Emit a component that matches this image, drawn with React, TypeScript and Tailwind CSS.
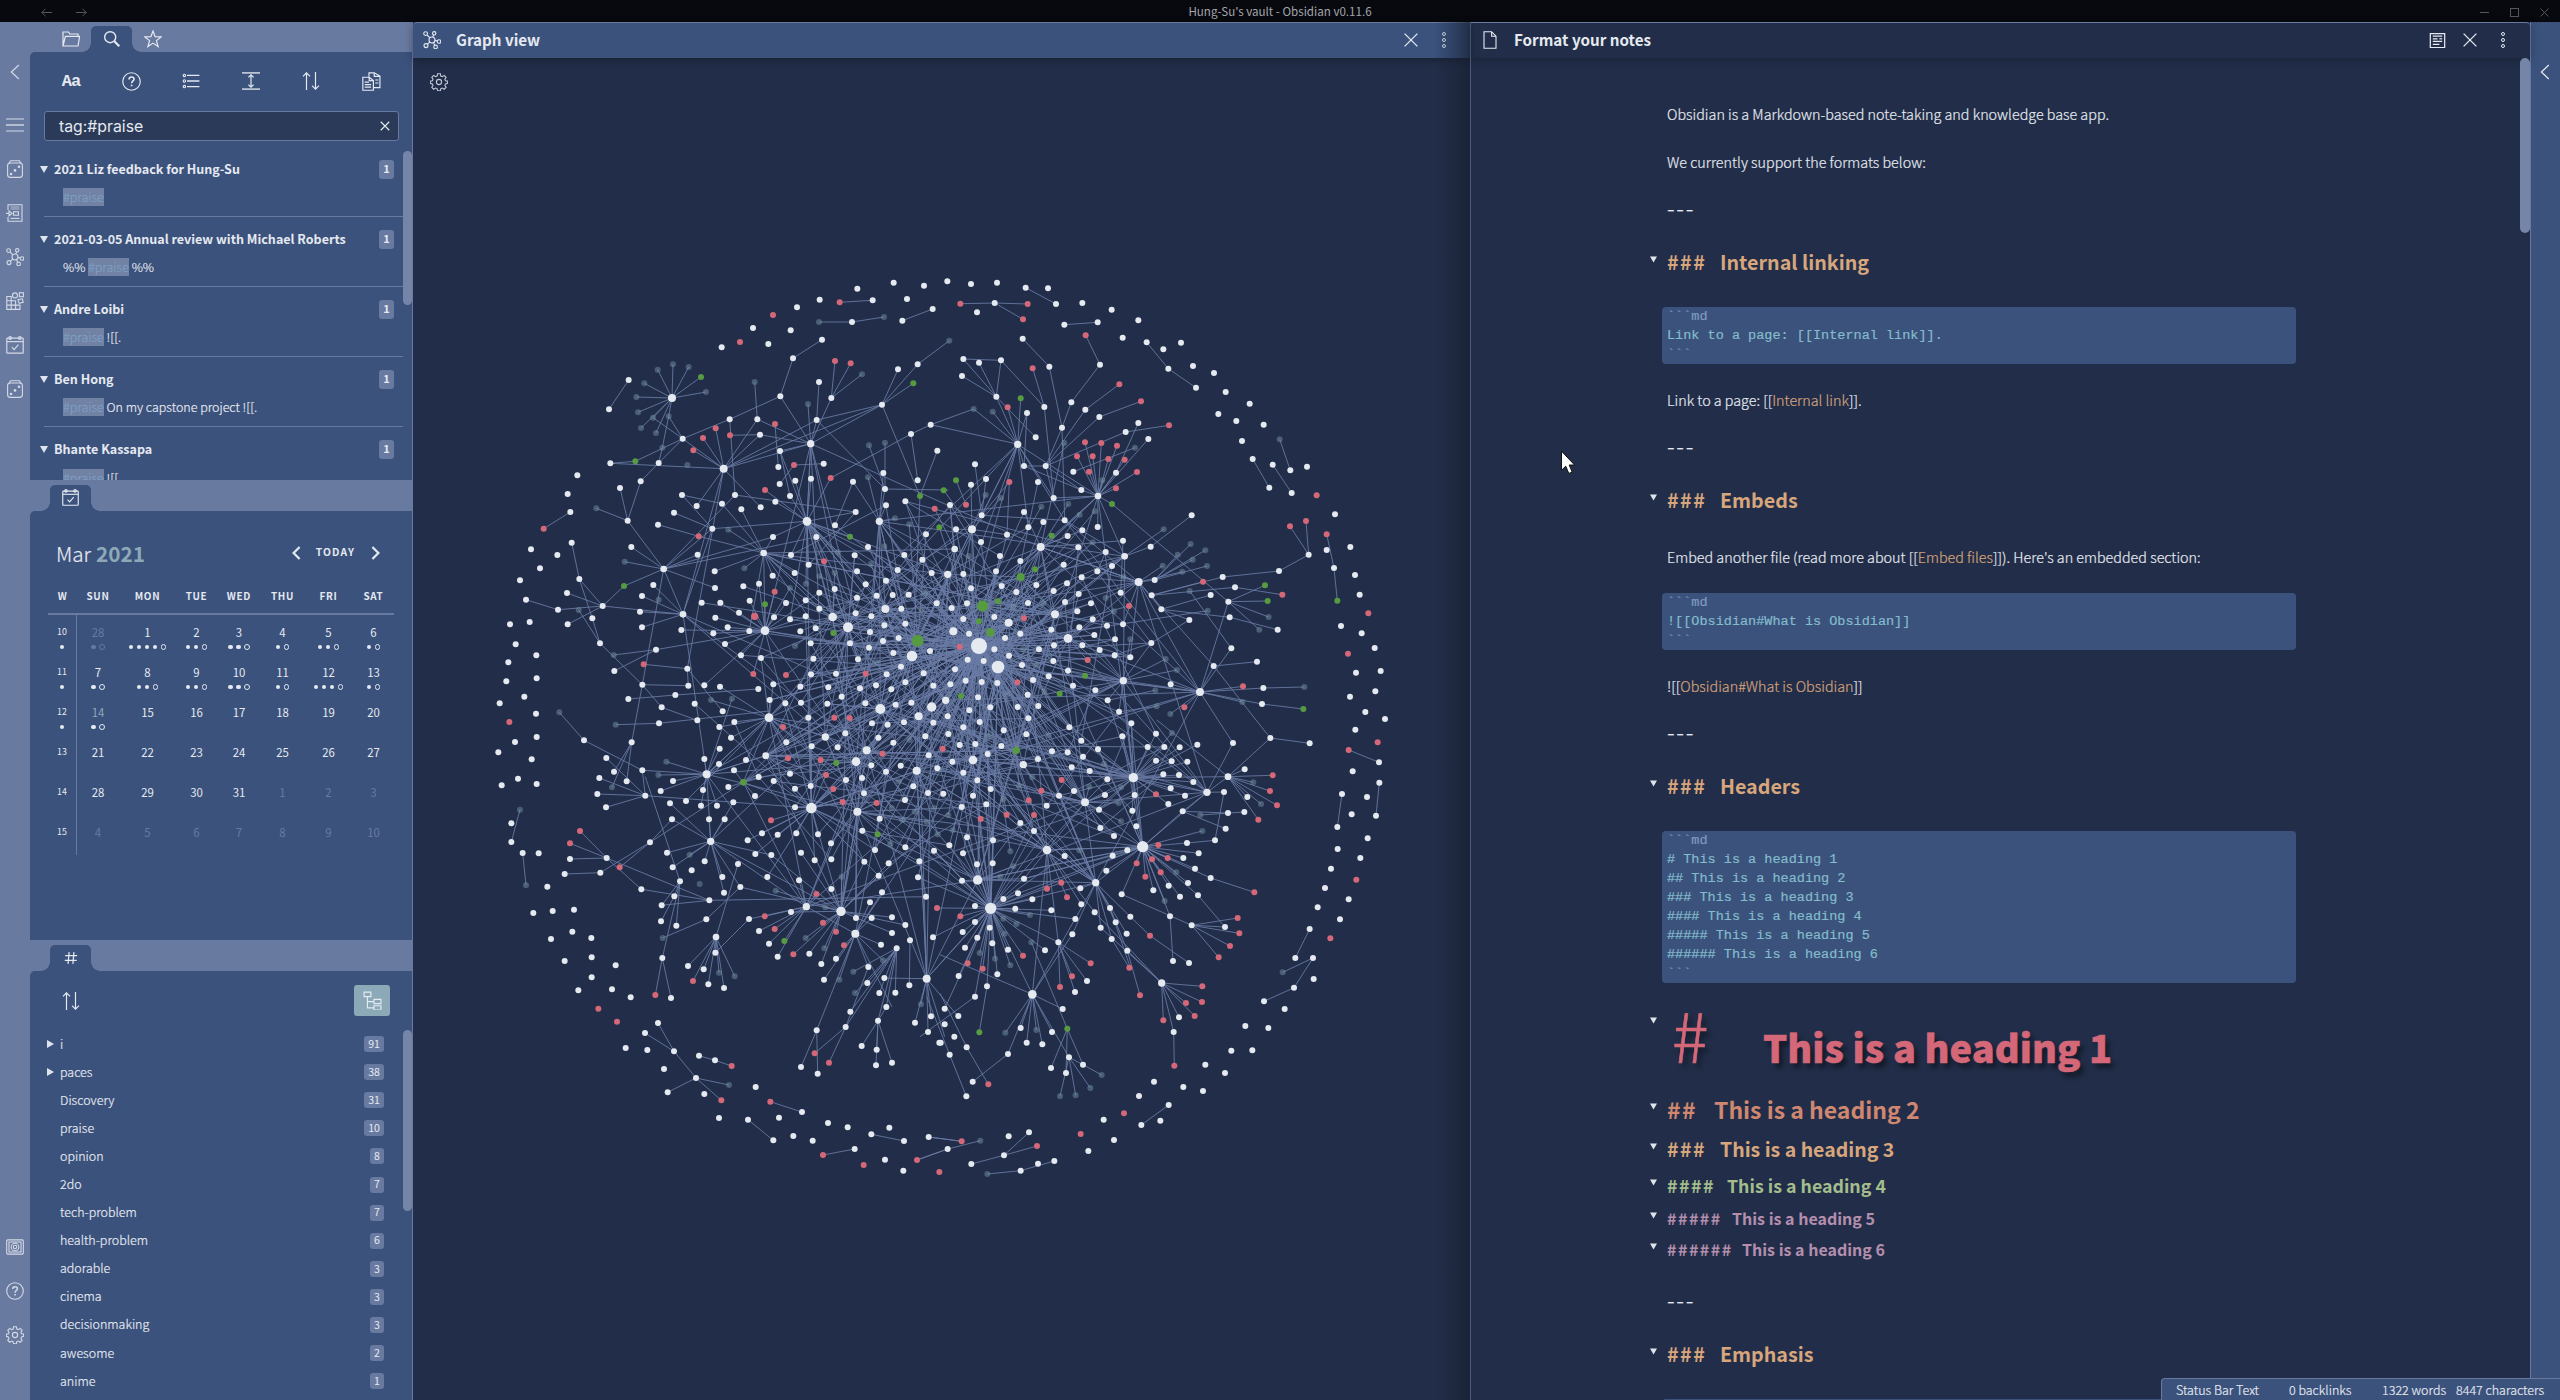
import type { ReactNode } from 'react';

/* ---------------------------------------------------------------- icons */

function Icon({ children, size = 18, w = 1.1, className = '' }: { children: ReactNode; size?: number; w?: number; className?: string }) {
  return (
    <svg width={size} height={size} viewBox="0 0 18 18" fill="none" stroke="currentColor" strokeWidth={w} className={`shrink-0 ${className}`}>
      {children}
    </svg>
  );
}

const GraphIcon = () => (
  <Icon>
    <circle cx="9" cy="9" r="3" /><circle cx="2.6" cy="2.6" r="1.9" /><circle cx="11.2" cy="2.3" r="1.7" />
    <circle cx="16" cy="10.5" r="1.8" /><circle cx="3" cy="14.6" r="2" /><circle cx="12.6" cy="15.9" r="1.8" />
    <path d="M4 4l2.9 2.8M10.6 4l-.8 2.1M12 9.4l2.3.6M4.4 13.2l2.3-2.1M10.4 11.7l1.4 2.6" />
  </Icon>
);
const DiceIcon = () => (
  <Icon>
    <rect x="1.6" y="3" width="14.8" height="14.4" rx="2.6" /><path d="M3 3.4L4.6.8h8.8L15 3.4" />
    <g fill="currentColor" stroke="none"><circle cx="5" cy="14" r="1.3" /><circle cx="9" cy="10.4" r="1.3" /><circle cx="13" cy="6.8" r="1.3" /></g>
  </Icon>
);
const DocArrowIcon = () => (
  <Icon>
    <path d="M2 6V.8h14v16.4H2V13" /><path d="M4.5 3h9M4.5 5h9" strokeOpacity=".7" />
    <path d="M0 9.4h3V7l3 2.4-3 2.4V9.4" /><rect x="7.5" y="7.8" width="5" height="3.4" /><path d="M4.5 14.4h9" />
  </Icon>
);
const BlocksIcon = () => (
  <Icon>
    <path d="M.8 4.5h4.4v4.3h4.4v4.3H14v4.3H.8zM.8 8.8h4.4v8.6M.8 13.1h8.8v4.3" />
    <circle cx="9" cy="3.4" r="2.5" /><rect x="13.4" y=".7" width="4" height="4" /><path d="M12 7.6l4.4-.8.8 3.6-4 .9z" />
  </Icon>
);
const CalIcon = ({ size = 18 }: { size?: number }) => (
  <Icon size={size} w={1.2}>
    <rect x=".8" y="2.2" width="16.4" height="15" rx=".6" /><path d="M.8 5.6h16.4" /><path d="M5.8 11.2l2.3 2.4 4.3-5" />
    <circle cx="4.2" cy="2" r="1.3" /><circle cx="13.8" cy="2" r="1.3" />
  </Icon>
);
const HelpIcon = ({ size = 18 }: { size?: number }) => (
  <Icon size={size}>
    <circle cx="9" cy="9" r="8.3" /><path d="M6.7 7c0-1.5 1-2.3 2.4-2.3s2.3.9 2.3 2.1c0 1.7-2.3 1.7-2.3 3.9" strokeWidth="1.5" /><path d="M9.1 12v1.6" strokeWidth="1.6" />
  </Icon>
);
const GearIcon = () => (
  <Icon>
    <circle cx="9" cy="9" r="2.6" />
    <path d="M7.6.8h2.8l.4 2.2 1.5.6 1.9-1.2 1.9 1.9-1.2 1.9.6 1.5 2.1.4v2.3l-2.1.5-.6 1.5 1.2 1.9-1.9 1.9-1.9-1.2-1.5.6-.4 2.1H7.6l-.5-2.1-1.5-.6-1.9 1.2-1.9-1.9L3 12.4l-.6-1.5-2.1-.5V8.1l2.1-.4L3 6.2 1.8 4.3l1.9-1.9 1.9 1.2L7.1 3z" />
  </Icon>
);
const VaultIcon = () => (
  <Icon>
    <rect x=".7" y="1.9" width="16.6" height="14.2" rx="1" /><rect x="3" y="4" width="12" height="10" />
    <circle cx="9" cy="9" r="3.8" /><circle cx="9" cy="9" r="1.7" />
  </Icon>
);
const SortIcon = () => (
  <Icon w={1.2}>
    <path d="M4.5 18V.8M1 4.3L4.5.8 8 4.3M13.5 0v17.2M10 13.7l3.5 3.5 3.5-3.5" />
  </Icon>
);
const DotsIcon = () => (
  <Icon w={1}>
    <circle cx="9" cy="3" r="1.5" /><circle cx="9" cy="9" r="1.5" /><circle cx="9" cy="15" r="1.5" />
  </Icon>
);
const CloseIcon = ({ size = 18, w = 1.1 }: { size?: number; w?: number }) => (
  <Icon size={size} w={w}><path d="M2.6 2.6l12.8 12.8M15.4 2.6L2.6 15.4" /></Icon>
);
const ChevronLeft = () => <Icon w={1.2}><path d="M12.8 2L5.4 9l7.4 7" /></Icon>;

/* ---------------------------------------------------------------- graph */

const ORIGIN: [number, number][] = [[480, 260], [940, 260], [480, 720], [940, 720]];

const WHITE = [
  '1132,86 1241,68 1332,77 1019,119 1178,121 1281,117 951,142 1358,147 1116,186 1267,182 819,204 932,211 865,252 725,262 1026,239 939,295 1313,313 1254,328 446,360 1017,366 387,448 901,409 1054,414 749,478 832,478 1010,480 1352,494 1293,522 840,524 608,536 900,573 1372,572 391,610 536,609 895,621 1031,611 292,646 1210,639 946,662 993,656 899,672 482,664 1119,665 1313,661 420,684 263,702 606,705 765,705 930,708 1215,687 886,725 1218,736 1276,724 650,738 726,731 842,742 784,748 271,756 582,758 1127,756 443,782 534,794 697,806 1065,796 879,831 1009,831 1338,823 275,848 454,861 1164,861 153,868 232,885 653,884 1124,886 1273,885 933,885 1327,899 986,914 180,925 704,934 1131,934 1253,930 944,939 1355,939 878,947 298,957 120,961 1218,962 520,975 837,971 790,979 1157,973 705,984 1064,987 261,999 1018,998 486,1008 1238,1005 1286,1004 1190,1007 138,1019 1131,1013 809,1022 977,1021 665,1028 721,1028 918,1029 368,1038 234,1049 1370,1030 1018,1046 1264,1046 480,1055 777,1058 1127,1060 977,1069 337,1075 706,1073 882,1072 1174,1069 930,1078 149,1086 90,1093 263,1093 1276,1091 1213,1096 486,1102 743,1102 1007,1105 604,1110 808,1113 961,1114 1170,1116 700,1120 1256,1134 1209,1143 992,1150 1110,1150 735,1152 107,1153 360,1150 1167,1163 528,1169 1350,1173 1240,1179 169,1186 783,1186 843,1194 1000,1196 1134,1198 85,1207 1263,1220 622,1226 403,1233 993,1243 1068,1241 1220,1243 1331,1240 170,1255 79,1264 487,1274 625,1277 673,1276 720,1280 880,1273 961,1280 1045,1282 1188,1276 1276,1267 1360,1277 835,1287 1140,1285 1234,1288 586,1305 133,1310 1085,1310 445,1317 869,1320 59,1330 644,1331 916,1330 963,1328 1042,1331 1156,1330 1247,1334 1294,1328 545,1342 168,1361 728,1354 985,1373',
  '22,64 93,72 171,68 257,83 324,85 164,129 348,132 427,129 515,149 111,157 473,187 373,194 595,181 548,233 248,236 620,247 723,248 670,268 70,297 117,308 183,301 328,320 480,314 685,326 759,318 822,339 66,348 768,383 857,396 169,410 929,431 394,427 313,441 436,449 835,462 261,459 478,471 889,483 595,489 971,494 366,503 557,516 287,532 625,537 906,543 105,613 252,618 317,618 938,597 998,614 1051,631 1101,620 400,635 528,638 138,657 294,666 93,674 988,683 424,690 1055,699 341,714 30,735 252,756 1185,763 125,766 755,766 374,781 310,786 265,802 473,801 48,808 427,811 201,824 383,828 549,842 123,846 415,862 632,860 1231,861 497,876 1160,870 1106,884 180,888 371,914 241,903 516,918 1182,924 1017,933 168,934 472,934 1245,945 70,942 644,960 425,952 848,951 381,970 185,978 289,975 885,982 93,985 341,993 229,996 542,998 416,1002 635,1006 812,1005 1259,1004 375,1026 865,1025 264,1029 81,1030 453,1030 35,1044 664,1048 412,1054 163,1071 869,1072 70,1077 458,1078 748,1080 549,1093 1203,1098 501,1097 1013,1109 418,1102 334,1109 87,1121 241,1121 1265,1120 463,1125 195,1134 525,1138 634,1149 427,1156 342,1156 1304,1164 874,1165 163,1168 297,1168 479,1170 571,1192 207,1187 524,1186 83,1199 131,1203 340,1203 951,1205 821,1218 246,1215 45,1228 384,1232 1322,1233 1248,1238 326,1249 279,1260 77,1262 125,1266 172,1269 31,1273 692,1273 399,1277 970,1284 466,1291 1306,1294 263,1304 1230,1310 114,1312 503,1321 966,1332 295,1338 233,1341 151,1342 88,1351 537,1355 1276,1356 23,1369 265,1375 1335,1377',
  '170,51 105,66 55,97 155,118 114,176 170,192 65,196 312,61 455,67 379,114 402,155 487,151 358,174 440,184 352,222 496,227 378,262 94,310 94,366 128,399 176,400 270,417 380,414 361,458 254,462 202,500 510,367 160,579 218,573 282,569 277,635 213,657 334,654 335,712 254,723 407,736 335,772 295,811 396,808 452,832 537,10 652,1 763,6 718,21 753,53 719,86 673,117 717,132 798,120 762,151 836,171 881,183 579,183 542,213 669,210 745,201 570,250 618,243 663,257 711,257 760,247 825,228 576,298 687,298 734,298 846,340 803,361 893,344 949,340 945,262 945,206 992,198 930,161 919,67 995,79 1073,82 1096,40 1176,10 1223,14 1272,7 1360,8 1195,53 1240,68 1336,49 1346,106 1174,136 1262,137 1218,155 1146,174 1098,180 1372,145 1300,199 1344,219 1152,220 1275,240 1199,296 1147,332 1014,343 1053,370 963,398 1004,421 1054,418 1153,425 1185,390 1276,382 1226,430 1318,424 1362,392 1314,472 1196,467 1206,517 1170,547 1338,530 561,398 674,424 578,442 635,451 826,402 874,405 774,432 727,471 600,484 732,518 781,501 862,471 957,481 1054,507 484,508 583,529 688,541 545,556 543,604 589,617 679,598 807,597 933,576 837,633 867,671 893,710 988,701 1024,732 1068,716 1032,779 1128,594 1175,594 1236,592 1276,615 1236,639 1290,661 1359,652 1203,674 1250,685 1165,741 1213,774 1162,789 1198,819 1246,818 1288,796 1219,861 1111,875 1194,902 1097,921 1010,931 1305,908 1353,889 1344,936 1378,968 1145,978 1190,989 1188,1036 1236,1028 963,1041 1013,1061 706,698 624,738 671,748 685,793 732,804 547,714 573,834 534,909 495,939 582,994 502,990 437,984 552,1047 648,1074 563,1117 657,1007 705,1021 673,1122 827,1101 717,1194 804,1199 966,1176 897,1193 880,1261 940,1248 998,1262 1044,1209 1103,1222 1228,1223 1174,1243 1272,1263 1346,1251 1124,1287 1215,1319 1270,1352',
  '25,42 70,22 119,6 191,31 259,43 388,22 59,75 106,72 184,78 143,102 294,117 37,125 70,158 336,94 383,97 424,62 474,88 429,110 395,142 449,153 112,181 152,207 99,227 10,221 357,227 402,213 502,178 495,225 65,261 139,253 320,257 477,269 241,309 282,333 481,324 522,348 81,352 159,361 28,376 69,400 111,433 158,430 374,408 518,407 499,452 562,391 252,476 66,482 234,520 190,537 277,538 226,566 421,505 334,571 424,553 406,597 105,558 105,606 68,636 149,623 112,653 157,670 75,683 204,689 56,768 172,763 141,799 105,830 315,691 355,667 397,643 441,783 405,816 464,577 510,564 527,607 482,623 560,641 515,657 562,692 571,590 545,523 589,319 577,272 584,225 547,49 574,10 648,41 623,81 673,81 719,82 772,74 648,122 695,124 742,125 670,163 717,165 760,186 692,205 735,227 685,252 728,274 864,279 913,276 857,326 825,361 741,369 776,400 730,414 765,446 744,489 686,497 640,511 720,530 774,526 812,474 855,621 690,589 755,616 699,723 747,729 879,69 991,54 1109,70 914,148 852,216 922,231 1246,29 1317,127 1238,154 1318,188 1206,222 1281,231 1235,283 1308,287 1192,321 1283,355 1193,387 1261,414 1173,446 1155,504 1226,538 1133,562 1200,598 1109,627 1066,714 1119,714 1121,777 1062,803 972,844 1034,867 916,918 985,924 874,992 937,991 796,1034 855,1059 642,1085 730,1101 789,1113 597,1128 686,1155 661,1202 604,1215 491,1199 522,1260 445,1293 701,936 717,892 368,867 242,924 260,968 307,973 336,936 204,1002 98,1085 14,866 55,888 14,913 43,950 80,982 29,1004 2,968 79,1129 387,1012 429,1034 333,1044 378,1059 267,1237 206,1249 192,1306 94,1332 23,1287 242,1352 294,1331 343,1323',
];

const RED = [
  '1079,127 879,165 780,246 1065,303 1112,310 885,492 707,505 750,526 669,534 640,571 942,615 1052,654 855,690 1364,746 191,806 656,829 1032,904 884,995 824,1069,11 491,1213 820,1242 918,1245 1157,1241 1063,1373 1109,1374',
  '61,131 263,132 249,178 437,226 278,325 538,373 603,424 203,442 687,496 435,547 484,549 531,557 411,589 458,589 505,597 554,599 447,635 591,636 528,685 208,666 78,734 1130,706 1098,783 1050,799 1160,823 789,965 1027,1004 567,1038 1285,1060 252,1075 59,1160 443,1200 1224,1181 232,1267 909,1279 733,1342',
  '88,6 909,21 924,115 1022,120 1038,165 1207,101 1060,207 1088,246 1190,249 873,301 300,333 270,370 419,442 1009,522 854,589 884,627 1029,608 1068,635 1092,676 940,703 1371,564 639,783 526,825 355,866 411,905 755,1038 724,1141 1004,1000 1047,1028 871,1145 1029,1305 1151,1335 1311,1320 1378,1356',
  '8,86 365,180 304,212 266,241 200,284 282,285 122,297 648,223 655,375 636,418 683,414 590,430 616,470 662,457 364,488 321,506 381,532 61,589 249,707 83,730 128,746 452,730 396,769 360,801 630,647 568,743 600,826 998,166 990,213 1011,256 955,299 943,517 893,594 898,640 870,678 836,712 1313,67 1226,90 1249,479 1171,655 787,799 786,846 738,849 764,888 670,901 703,1037 145,1093 552,1180 422,1242 291,1278 65,1264',
];

const GREEN = [
  '663,351 1300,370 466,604 1320,708 1110,830 432,978 855,1033 1060,1119 1378,802',
  '242,415 48,661 11,691 516,732 335,827 285,928 975,976 983,1023 1192,1022 174,1024 117,1084 435,1247 359,1301 63,1308 1090,1347',
  '1069,129 1193,343 913,663',
  '118,937 382,926',
];

const DIM = [
  '1017,186 1212,171 579,313 626,321 533,329 493,370 678,396 469,411 474,457 519,473 566,469 483,504 528,519 824,366 984,432 1146,343 547,563 622,615 1167,556 1215,548 1164,652 349,745 1245,775 1288,793 745,809 1213,859 434,905 1074,877 1173,911 793,925 1064,938 1018,949 978,971 930,984 536,1019 296,1050 945,1158 401,1185 1190,1207 238,1357 693,1320 756,1316 1335,1000 1326,1049',
  '28,242 101,447 158,455 373,549 585,563 1019,538 137,705 183,714 304,740 385,732 419,764 465,754 487,661 671,808 752,852 796,871 713,884 758,899 668,917 801,918 727,935 551,950 458,847 749,993 803,1052 986,1071 958,1109 497,1014 522,1054 571,1138 677,1197 711,1230 646,1291 650,1339 691,1362 1093,1281 907,1326 313,1294 202,1304 290,1215 86,888 220,1040 250,1168 310,1030',
  '407,14 559,125 535,165 396,202 120,269 138,496 629,404 659,492 887,512 548,654 717,758 764,769 1255,184 1235,264 1304,275 1267,300 1340,306 1362,264 1231,372 1373,343 1085,470 1036,562 977,654 1033,685 1078,779 1120,755 1125,819 1209,721 1323,853 747,1095 1289,60',
  '147,47 326,46 237,197 277,172 190,238 448,200 492,131 543,202 536,249 543,304 418,391 211,394 220,439 181,470 270,585 194,641 230,612 190,596 274,667 119,699 165,716 211,736 696,39 940,187 963,252 781,285 787,333 709,457 674,543 1028,757 196,938 289,930 485,1065 451,1104 407,1126 360,1129 121,1262 142,1362 38,330 25,285',
];

/* x, y, radius of the well-connected notes */
const HUBS = [
  '576,414,12 992,551,11 731,626,12 1206,434,9 981,784,13 1198,784,11 551,927,10 851,879,10 609,1063,10 1058,1071,13 1104,1102,15 855,1112,13 1216,1047,12 1296,1188,16 1201,1347,15 1355,1341,14 867,1373,13 1316,1369,12',
  '233,553,11 474,708,10 96,808,12 44,867,10 302,861,12 554,889,10 596,966,12 23,943,11 345,1063,12 206,1088,12 40,1114,12 384,1135,13 117,1158,24 174,1221,19 550,1262,11 780,1296,12 17,1321,11',
  '680,163,12 857,107,10 1036,51,11 1128,125,13 1160,91,12 994,264,16 1132,275,12 1310,152,12 692,364,11 979,560,11 1083,574,14 1126,641,12 708,651,10 1340,776,12',
  '99,120,13 250,134,11 580,173,14 435,247,12 321,390,13 608,380,17 113,480,14 152,565,17 467,488,11 864,170,10 801,217,11 277,823,13 665,789,11 ',
];
const GREEN_HUBS = ['1313,1142,18', '128,1038,17 242,951,12 151,1117,13', '790,187,10', '229,91,11'];

/* source>targets */
const LINKS = [
  '1079,127>1178,121|1017,186>1116,186|1212,171>1116,186|1267,182>1358,147|1026,239>939,295|939,295>901,409|901,409>749,478 992,551|576,414>579,313 626,321 533,329 493,370 678,396 469,411 474,457 519,473 566,469 483,504 528,519 663,351|446,360>387,448|824,366>832,478|832,478>731,626 992,551|749,478>608,536 765,705|608,536>519,473 566,469 466,604 536,609 731,626|391,610>466,604 731,626|536,609>547,563 482,664|547,563>566,469|482,664>443,782|420,684>443,782|349,745>443,782|443,782>551,927|731,626>640,571 669,534 707,505 840,524 992,551 1206,434 1010,480 650,738 842,742 609,1063 622,1226|750,526>840,524|840,524>992,551|1017,366>1010,480|984,432>992,551|1010,480>992,551 1206,434 1215,687|1054,414>1065,303 1112,310 1146,343 992,551|1206,434>1254,328 1313,313 1300,370 992,551 1320,708|1313,313>1408,242|885,492>895,621|900,573>992,551 981,784|942,615>1031,611 899,672|946,662>981,784|993,656>981,784|930,708>981,784 900,573|855,690>981,784|1052,654>981,784 1293,522|1293,522>1352,494 1313,661|1352,494>1481,447 1615,553|1167,556>1215,687|1215,548>1215,687|1210,639>1198,784|1164,652>1198,784|1119,665>1198,784 1065,796|1372,572>1320,708|1215,687>1405,690 1198,784|981,784>697,806 1127,756 992,551 1009,831 1058,1071 1127,1060 1216,1047 1104,1102 930,1078 879,831 1131,934|606,705>726,731 697,806|582,758>697,806|534,794>656,829|656,829>851,879|697,806>609,1063 551,927|726,731>851,879|765,705>1127,756 551,927|745,809>851,879|879,831>551,927|653,884>551,927|454,861>551,927|434,905>551,927|551,927>432,978 609,1063 487,1274 705,984 1009,831|432,978>368,1038|368,1038>261,999 234,1049 263,1093 298,957 609,1063|234,1049>138,1019|275,848>298,957|298,957>337,1075|337,1075>360,1150|296,1050>360,1150|360,1150>487,1274|271,756>191,806|520,975>609,1063|486,1008>609,1063|480,1055>609,1063|486,1102>609,1063|491,1213>622,1226|528,1169>403,1233 855,1112|401,1185>528,1169|487,1274>625,1277 545,1342 455,1447|545,1342>652,1381|586,1305>445,1317 835,1287|622,1226>625,1277 728,1354|238,1357>312,1441|704,934>851,879|851,879>855,1112 808,1113 1104,1102 879,831|1198,784>1296,1188 1216,1047 1460,1158 1273,885|992,551>1104,1102 981,784|1320,708>1300,1188',
  '257,83>348,132|61,131>164,129|164,129>263,132 249,178|373,194>473,187|437,226>480,314|480,314>394,427|394,427>366,503|248,236>328,320|328,320>366,503|70,297>183,301 169,410|117,308>169,410|66,348>169,410|183,301>169,410 313,441|169,410>233,553 287,532|278,325>313,441|313,441>341,714|242,415>233,553|203,442>252,618|261,459>233,553 252,618|101,447>233,553|158,455>233,553|366,503>317,618 374,781|538,373>436,449|436,449>317,618|603,424>478,471|478,471>317,618|687,496>557,516|557,516>317,618|595,489>528,638|625,537>474,708|585,563>400,635|528,638>474,708|474,708>435,547 484,549 531,557 411,589 458,589 505,597 554,599 447,635 591,636 528,685 516,732 341,714 424,690 302,861 487,661|516,732>865,1025|317,618>341,714 424,690 252,618|233,553>125,766 341,714 374,781 265,802|252,618>424,690|620,247>685,326|685,326>768,383|1019,538>1051,631|938,597>988,683|998,614>1055,699|1050,799>1106,884|1098,783>1106,884|1106,884>1017,933|1017,933>848,951|1160,823>1182,924|1182,924>1192,1022|105,613>125,766|138,657>125,766|93,674>96,808|78,734>48,661|208,666>201,824 125,766|294,666>265,802|11,691>96,808|30,735>44,867|137,705>96,808|183,714>96,808|374,781>125,766 596,966 554,889 780,1296|755,766>632,860|632,860>554,889|671,808>554,889|549,842>302,861 542,998|752,852>644,960|796,871>644,960|713,884>644,960|758,899>644,960|801,918>644,960|668,917>596,966|727,935>596,966|596,966>644,960 302,861 425,952 571,1192 780,1296 821,1218 664,1048 472,934|848,951>635,1006|789,965>635,1006|885,982>635,1006 1027,1004|812,1005>664,1048|865,1025>975,976 983,1023 986,1071 958,1109 780,1296|869,1072>1013,1109 664,1048|664,1048>748,1080 635,1006|748,1080>634,1149|634,1149>524,1186 550,1262|874,1165>780,1296 749,993|821,1218>951,1205 948,1380 780,1296|780,1296>970,1284 909,1279 966,1332 692,1273 550,1262 834,1380 733,1342 691,1362|970,1284>1093,1281|966,1332>1090,1347|677,1197>550,1262|711,1230>550,1262|646,1291>503,1321|650,1339>537,1355|550,1262>117,1158 384,1232 503,1321',
  '120,269>94,366|128,399>138,496|312,61>487,151|487,151>496,227 680,163|455,67>402,155 440,184 396,202|496,227>379,114 358,174 352,222 378,262 994,264|496,170>600,484|559,125>680,163|535,165>680,163|579,183>680,163|542,213>680,163|669,210>680,163|680,163>857,107 1128,125 692,364|300,333>380,414|270,370>380,414|270,417>380,414|380,414>484,508 688,541|254,462>361,458|361,458>510,367|510,367>419,442 576,298|510,367>790,187|484,508>688,541|600,484>583,529 545,556 589,617|583,529>543,604|688,541>545,556 1338,530|548,654>679,598|679,598>781,501|547,714>600,484 526,825 573,834|708,651>624,738 639,783 671,748 685,793 717,758 732,804 764,769 706,698 774,432|706,698>807,597|807,597>979,560|837,633>979,560|854,589>979,560|867,671>979,560|884,627>979,560|893,710>979,560|913,663>979,560|933,576>1083,574|940,703>1083,574|977,654>1083,574|988,701>1083,574|1024,732>1083,574|1029,608>1083,574|1032,779>1126,641|1068,716>1126,641|1078,779>1126,641|1068,635>1083,574|1120,755>1250,685|1125,819>1250,685|1126,641>1010,931 1165,741 1236,861|1010,931>963,1041 1013,1061|1097,921>1004,1000 1047,1028 1165,741|1250,685>1097,921 1162,789 1198,819 1246,818 1111,875|1219,861>1250,685 1194,902|1194,902>1145,978 1190,989 1236,1028 1188,1036 1250,685|1288,796>1290,661|1340,776>1213,774 1305,908 1323,853 1353,889 1344,936 1310,152 1394,950 1435,890|534,909>582,994|495,939>582,994|582,994>648,1074|648,1074>563,1117 747,1095 724,1141|657,1007>705,1021|705,1021>755,1038|871,1145>966,1176|804,1199>880,1261|1174,1243>1272,1263|1029,1305>1124,1287|1346,1251>1445,1264|1311,1320>1403,1287|692,364>561,398 576,298 578,442 674,424 781,501 1083,574 874,405 979,560|407,14>537,10|537,10>867,-27|1132,275>1128,594|1130,275>1126,594|1083,574>874,405 781,501 1132,275 1196,467',
  '1226,90>1317,127|1318,188>1308,287|1206,222>1192,321|1109,627>1066,714|1028,757>1119,714|1119,714>1062,803|1062,803>972,844|834,0>879,69|948,0>991,54|879,69>801,217|991,54>1109,70 864,170|864,170>998,166 914,148 990,213 1011,256 940,187 963,252 922,231 955,299 801,217 650,0|801,217>435,247 852,216 608,380 728,274|852,216>825,361|728,274>864,279 857,326 608,380|781,285>913,276|580,173>574,10 648,41 623,81 673,81 719,82 772,74 648,122 695,124 742,125 670,163 717,165 760,186 692,205 735,227 685,252 648,223 584,225 435,247 321,94 577,272|608,380>655,375 636,418 683,414 590,430 616,470 662,457 709,457 674,543 741,369 776,400 730,414 765,446 744,489 686,497 640,511 720,530 774,526 812,474 787,333 589,319 562,391 152,565 113,480 190,537 252,476 518,407 321,390 499,452 545,523 690,589 467,488|812,474>943,517|741,369>825,361|774,526>855,621|545,523>755,616|690,589>699,723|755,616>893,594 898,640 870,678 836,712 855,621|571,590>630,647|630,647>747,729|467,488>510,564 527,607 560,641 515,657 482,623 571,590 113,480 277,823 397,643|510,564>562,692 571,743|562,692>600,826 665,789|515,657>568,743|482,623>665,789|464,577>665,789|665,789>787,799 786,846 738,849 764,888 670,901 717,892 701,936|701,936>703,1037|321,390>464,577 355,667 435,247 252,476|355,667>360,801 396,769 441,783 405,816 452,730|277,823>196,938 242,924 289,930 260,968 307,973 336,936 368,867 204,1002 387,1012 0,704 397,643|204,1002>98,1085|382,926>333,1044 429,1034 378,1059 274,667|387,1012>360,1129 407,1126 451,1104 429,1034|429,1034>485,1065|152,565>61,589 105,558 105,606 68,636 149,623 112,653 157,670 75,683 204,689 119,699 165,716 211,736 83,730 128,746 56,768 172,763 141,799 249,707 194,641 230,612 270,585 190,596 105,830 190,537 277,823 315,691 355,667 334,571|141,799>118,937|105,830>-60,950|29,1004>79,1129 -40,830|80,982>145,1093 0,820|267,1237>192,1306|192,1306>291,1278 94,1332|-34,1251>65,1264|23,1287>121,1262 -69,1320|142,1362>242,1352|242,1352>343,1323|604,1215>686,1155|435,247>502,178 495,225 477,269 481,324 522,348 543,202 536,249 543,304',
];

type P = { x: number; y: number; r: number };

function parse(groups: string[], r: number): P[] {
  return groups.flatMap((g, q) =>
    g.trim().split(/\s+/).map((s) => {
      const [x, y, size] = s.split(',').map(Number);
      return { x: ORIGIN[q][0] + x / 3, y: ORIGIN[q][1] + y / 3, r: size ? size / 3 : r };
    }),
  );
}

const white = parse(WHITE, 3);
const red = parse(RED, 3);
const green = parse(GREEN, 3);
const dim = parse(DIM, 3);
const hubs = parse(HUBS, 4);
const greenHubs = parse(GREEN_HUBS, 4);

function buildEdges() {
  const out: string[] = [];
  const linked = new Set<string>();
  const key = (x: number, y: number) => `${Math.round(x)},${Math.round(y)}`;
  const add = (ax: number, ay: number, bx: number, by: number) => {
    out.push(`M${ax.toFixed(1)} ${ay.toFixed(1)}L${bx.toFixed(1)} ${by.toFixed(1)}`);
    linked.add(key(ax, ay));
    linked.add(key(bx, by));
  };
  LINKS.forEach((g, q) => {
    const [ox, oy] = ORIGIN[q];
    g.split('|').forEach((entry) => {
      const [src, dst] = entry.split('>');
      const [sx, sy] = src.split(',').map(Number);
      dst.trim().split(/\s+/).forEach((d) => {
        const [tx, ty] = d.split(',').map(Number);
        add(ox + sx / 3, oy + sy / 3, ox + tx / 3, oy + ty / 3);
      });
    });
  });

  let seed = 20210314;
  const rnd = () => {
    seed = (seed * 1664525 + 1013904223) >>> 0;
    return seed / 4294967296;
  };
  const all = [...hubs, ...greenHubs];
  const inner = (p: P, d: number) => Math.hypot(p.x - 955, p.y - 705) < d;
  const centre = all.filter((h) => inner(h, 280));
  const pick = (p: P, reach: number) => {
    let best = centre[0];
    let score = -1;
    centre.forEach((h) => {
      const d = Math.hypot(h.x - p.x, h.y - p.y);
      if (d < 4) return;
      const s = (Math.pow(h.r, 1.6) / (d + reach)) * (0.15 + rnd());
      if (s > score) {
        score = s;
        best = h;
      }
    });
    return best;
  };
  [...white, ...dim, ...green, ...red].forEach((p, i) => {
    const isLinked = linked.has(key(p.x, p.y));
    if (!inner(p, 305)) return;
    const near = inner(p, 190);
    const n = near ? (i < white.length && rnd() < 0.75 ? 2 : 1) : isLinked ? 0 : 1;
    for (let k = 0; k < n; k++) {
      const h = pick(p, k === 0 ? 12 : 160);
      add(p.x, p.y, h.x, h.y);
    }
  });
  const mids = white.filter((p) => inner(p, 225));
  for (let i = 0; i < 230; i++) {
    const a = mids[Math.floor(rnd() * mids.length)];
    const b = mids[Math.floor(rnd() * mids.length)];
    const d = Math.hypot(a.x - b.x, a.y - b.y);
    if (d < 190) add(a.x, a.y, b.x, b.y);
  }
  centre.forEach((a) => {
    all.forEach((b) => {
      const d = Math.hypot(a.x - b.x, a.y - b.y);
      if (d > 5 && d < 300 && inner(b, 300) && rnd() < 0.12) add(a.x, a.y, b.x, b.y);
    });
  });
  return out.join('');
}
const EDGES = buildEdges();

const Nodes = ({ list, fill, opacity = 1 }: { list: P[]; fill: string; opacity?: number }) => (
  <g fill={fill} fillOpacity={opacity}>{list.map((p, i) => <circle key={i} cx={p.x} cy={p.y} r={p.r} />)}</g>
);

function GraphCanvas() {
  return (
    <svg width="1057" height="1342" viewBox="413 58 1057 1342" className="block">
      <path d={EDGES} stroke="#6a7ba6" strokeOpacity="0.85" strokeWidth="1" fill="none" />
      <Nodes list={dim} fill="#7b98a9" opacity={0.45} />
      <Nodes list={white} fill="#e5e9f0" />
      <Nodes list={red} fill="#d56878" />
      <Nodes list={green} fill="#569b41" />
      <Nodes list={hubs} fill="#e5e9f0" />
      <Nodes list={greenHubs} fill="#569b41" />
    </svg>
  );
}

/* -------------------------------------------------------------- sidebar */

function Tab({ active, children }: { active?: boolean; children: ReactNode }) {
  return (
    <div className={`relative flex h-[26px] w-[41px] items-center justify-center pb-px ${active ? 'rounded-t-[5px] bg-[#3b527d]' : ''}`}>
      {active && (
        <>
          <span className="absolute bottom-0 -left-[9px] h-[9px] w-[9px] bg-[radial-gradient(circle_at_0_0,transparent_8.5px,#3b527d_9px)]" />
          <span className="absolute bottom-0 -right-[9px] h-[9px] w-[9px] bg-[radial-gradient(circle_at_100%_0,transparent_8.5px,#3b527d_9px)]" />
        </>
      )}
      {children}
    </div>
  );
}

const TriDown = ({ className = '' }: { className?: string }) => (
  <svg width="8" height="7" viewBox="0 0 8 7" className={`shrink-0 ${className}`}><path d="M0 0h8L4 7z" fill="#dfe4ec" /></svg>
);
const TriRight = () => (
  <svg width="7" height="8" viewBox="0 0 7 8" className="shrink-0"><path d="M0 0v8l7-4z" fill="#dfe4ec" /></svg>
);

const Hit = () => <span className="inline-block h-[18px] bg-[#7182a5] text-[#7fa0c4]">#praise</span>;

const RESULTS: { title: string; body: ReactNode }[] = [
  { title: '2021 Liz feedback for Hung-Su', body: <Hit /> },
  { title: '2021-03-05 Annual review with Michael Roberts', body: <>%% <Hit /> %%</> },
  { title: 'Andre Loibi', body: <><Hit /> ![[.</> },
  { title: 'Ben Hong', body: <><Hit /> On my capstone project ![[.</> },
  { title: 'Bhante Kassapa', body: <><Hit /> ![[.</> },
];

function SearchPanel() {
  return (
    <section className="flex h-[428px] flex-col overflow-hidden rounded-tl-[5px] bg-[#3b527d]">
      <div className="flex h-[58px] shrink-0 items-center pl-[11px]">
        <div className="flex w-[60px] justify-center font-['Liberation_Mono','DejaVu_Sans_Mono',monospace] text-[17px] leading-none font-bold tracking-[-1px]">Aa</div>
        <div className="flex w-[60px] justify-center"><HelpIcon size={19} /></div>
        <div className="flex w-[60px] justify-center">
          <Icon><path d="M5 3.4h12.4M5 9h12.4M5 14.6h12.4" strokeWidth="1.3" /><circle cx="2.4" cy="3.4" r="1.2" /><circle cx="2.4" cy="9" r="1.2" /><circle cx="2.4" cy="14.6" r="1.2" /></Icon>
        </div>
        <div className="flex w-[60px] justify-center">
          <Icon><path d="M0 .9h18M0 17.1h18" strokeWidth="1.8" strokeOpacity=".75" /><path d="M9 3v12M6.4 5.4L9 2.8l2.6 2.6M6.4 12.6L9 15.2l2.6-2.6" strokeWidth="1.2" /></Icon>
        </div>
        <div className="flex w-[60px] justify-center"><SortIcon /></div>
        <div className="flex w-[60px] justify-center">
          <Icon size={19}><path d="M6.6 4.4V.8h5l5.4 3v11H11M11.6.8v3.4H17" /><path d="M.8 5h6l4 3v9.3H.8zM6.8 5v3.2h4" /><path d="M2.6 9.6h4M2.6 12h6M2.6 14.4h6M12.6 7.6h3M12.6 10.4h3" /></Icon>
        </div>
      </div>
      <div className="mt-px ml-[14px] flex h-[30px] w-[355px] shrink-0 items-center justify-between rounded-[3px] border border-[#697aa1] bg-[#2a3a58] pl-[14px] pr-[7px]">
        <span className="pt-px font-['Inter',sans-serif] text-[15.8px] leading-none">tag:#praise</span>
        <CloseIcon size={12} w={1.7} />
      </div>
      <div className="mt-[10px] flex min-h-0 flex-1 justify-between">
        <div className="w-[373px] pl-[10px]">
          {RESULTS.map((r, i) => (
            <div key={r.title} className={`relative ml-[4px] border-b border-[#697aa1] ${i === 0 ? 'h-[66px] pt-[8px]' : 'h-[70px] pt-[12px]'}`}>
              <div className="-ml-[4px] flex h-[21px] items-center pr-[9px]">
                <TriDown className="-mt-px" />
                <span className="-mt-[2px] ml-[6px] flex-1 text-[12.54px] leading-[21px] font-bold whitespace-nowrap">{r.title}</span>
                <span className="-mt-px flex h-[19px] w-[15px] items-center justify-center rounded-[3px] bg-[#697aa1] pb-px text-[11px] leading-none font-bold">1</span>
              </div>
              <div className={`ml-[19px] text-[12.48px] leading-[18px] font-light whitespace-nowrap [-webkit-text-stroke:0.2px] ${i === 4 ? 'mt-[9px]' : 'mt-[8px]'}`}>{r.body}</div>
            </div>
          ))}
        </div>
        <div className="h-[154px] w-[9px] rounded-full bg-[#7485a8]" />
      </div>
    </section>
  );
}

const DOTS: Record<string, string> = {
  '0-0': 'fo', '0-1': 'ffffo', '0-2': 'ffo', '0-3': 'ffo', '0-4': 'fo', '0-5': 'ffo', '0-6': 'fo',
  '1-0': 'fo', '1-1': 'ffo', '1-2': 'ffo', '1-3': 'ffo', '1-4': 'fo', '1-5': 'fffo', '1-6': 'fo', '2-0': 'fo',
};
const Dots = ({ s }: { s: string }) => (
  <div className="flex h-[8px] items-center justify-center gap-[3.5px]">
    {s.split('').map((c, i) => (c === 'f' ? <span key={i} className="h-[4.5px] w-[4.5px] rounded-full bg-current" /> : <span key={i} className="h-[5.5px] w-[5.5px] rounded-full border border-current" />))}
  </div>
);

function CalendarPanel() {
  const cols = 'grid grid-cols-[29px_42px_57px_41px_44px_43px_49px_41px]';
  return (
    <section className="h-[429px] overflow-hidden rounded-tl-[5px] bg-[#3b527d] pl-[18px]">
      <div className="mt-[25px] flex h-[33px] w-[346px] items-center pl-[8px]">
        <span className="text-[20.7px] leading-[32px] font-light [-webkit-text-stroke:0.2px]">Mar</span>
        <span className="ml-[5px] flex-1 text-[20.76px] leading-[32px] font-bold text-[#8ca9b8]">2021</span>
        <svg width="9" height="14" viewBox="0 0 9 14" className="mt-px mr-[15px]"><path d="M7.6 1L1.6 7l6 6" stroke="currentColor" strokeWidth="2.2" fill="none" /></svg>
        <span className="text-[10.3px] leading-none font-bold tracking-[1.1px]">TODAY</span>
        <svg width="9" height="14" viewBox="0 0 9 14" className="mt-px ml-[16px] mr-[14px]"><path d="M1.4 1l6 6-6 6" stroke="currentColor" strokeWidth="2.2" fill="none" /></svg>
      </div>
      <div className={`${cols} mt-[19px] h-[27px] w-[346px] border-b-2 border-[#697aa1] text-center text-[9.9px] leading-[17px] font-bold tracking-[0.7px]`}>
        {['W', 'SUN', 'MON', 'TUE', 'WED', 'THU', 'FRI', 'SAT'].map((d) => <span key={d}>{d}</span>)}
      </div>
      {[0, 1, 2, 3, 4, 5].map((w) => (
        <div key={w} className={`${cols} h-[40px] w-[346px] text-center`}>
          <div className="border-r border-[#697aa1] pt-[9px]">
            <div className="text-[8.8px] leading-[15px]">{10 + w}</div>
            <div className="h-[4px]" />
            {w < 3 && <Dots s="f" />}
          </div>
          {[0, 1, 2, 3, 4, 5, 6].map((d) => {
            const n = w * 7 + d;
            const label = n === 0 ? 28 : n > 31 ? n - 31 : n;
            const faded = n === 0 || n > 31;
            return (
              <div key={d} className={`pt-[10px] ${faded ? 'text-[#697aa1]' : ''}`}>
                <div className={`text-[11.4px] leading-[15px] ${n === 14 ? 'text-[#8ca9b8]' : ''}`}>{label}</div>
                <div className="h-[3px]" />
                {DOTS[`${w}-${d}`] && <Dots s={DOTS[`${w}-${d}`]} />}
              </div>
            );
          })}
        </div>
      ))}
    </section>
  );
}

const TAGS: [string, number][] = [
  ['i', 91], ['paces', 38], ['Discovery', 31], ['praise', 10], ['opinion', 8], ['2do', 7], ['tech-problem', 7],
  ['health-problem', 6], ['adorable', 3], ['cinema', 3], ['decisionmaking', 3], ['awesome', 2], ['anime', 1],
];

function TagPanel() {
  return (
    <section className="flex h-[429px] flex-col overflow-hidden rounded-tl-[5px] bg-[#3b527d]">
      <div className="mt-[14px] flex h-[31px] shrink-0 items-center justify-between pl-[32px] pr-[22px]">
        <SortIcon />
        <span className="flex h-[31px] w-[36px] items-center justify-center rounded-[3px] bg-[#8ca9b8]">
          <Icon size={19}><path d="M1 1h6.5v4.4H1zM10.4 8h6.6v4h-6.6zM10.4 14h6.6v4h-6.6zM4.2 5.4V16h6.2M4.2 10h6.2" /></Icon>
        </span>
      </div>
      <div className="mt-[14px] flex min-h-0 flex-1 justify-between">
        <div className="w-[354px] pl-[17px]">
          {TAGS.map(([t, n], i) => (
            <div key={t} className="flex h-[28.1px] items-center">
              <span className="w-[13px]">{i < 2 && <TriRight />}</span>
              <span className="-mt-px flex-1 text-[12.48px] leading-[20px] font-light [-webkit-text-stroke:0.2px]">{t}</span>
              <span className="flex h-[16px] items-center justify-center rounded-[3px] bg-[#697aa1] px-[4px] text-[10.6px] leading-none">{n}</span>
            </div>
          ))}
        </div>
        <div className="h-[181px] w-[9px] rounded-full bg-[#7485a8]" />
      </div>
    </section>
  );
}

function Sidebar() {
  return (
    <aside className="flex w-[383px] flex-col border-r border-[#697aa1] bg-[#697aa1]">
      <div className="flex h-[30px] items-end pl-[20px]">
        <Tab><Icon w={1.2}><path d="M1 16V2h5.4l1.4 2H16v2.4M1 16L3.4 6.4h14.2L16 16z" /></Icon></Tab>
        <Tab active><Icon w={1.4}><circle cx="7.2" cy="7.2" r="5.5" /><path d="M11.3 11.3l5 5" strokeWidth="2.2" /></Icon></Tab>
        <Tab><Icon w={1.2}><path d="M9 1l2.1 5.7 6 .2-4.7 3.7 1.7 5.9L9 13.1l-5.1 3.4 1.7-5.9L.9 6.9l6-.2z" /></Icon></Tab>
      </div>
      <SearchPanel />
      <div className="flex h-[31px] items-end pl-[20px]"><Tab active><CalIcon size={17} /></Tab></div>
      <CalendarPanel />
      <div className="flex h-[31px] items-end pl-[20px]"><Tab active><Icon size={14} w={1.6}><path d="M6.6 1.5l-1.4 15M12.8 1.5l-1.4 15M1.5 5.8h15.4M1 12h15.4" /></Icon></Tab></div>
      <TagPanel />
    </aside>
  );
}

/* --------------------------------------------------------------- editor */

const Para = ({ children, className = 'mt-[24px]' }: { children: ReactNode; className?: string }) => (
  <div className={`h-[24px] pl-[5px] text-[14.33px] leading-[24px] font-light whitespace-nowrap [-webkit-text-stroke:0.2px] ${className}`}>{children}</div>
);
const Rule = ({ className = 'mt-[24px]' }: { className?: string }) => (
  <div className={`h-[24px] pl-[5px] ${className}`}>
    <span className="relative -top-[3px] text-[23px] leading-[24px] font-light tracking-[1.7px] [-webkit-text-stroke:0.2px]">---</span>
  </div>
);
const Link = ({ children }: { children: ReactNode }) => <span className="text-[#d4a27c]">{children}</span>;

function Heading({ n, children, className, hash }: { n: number; children: ReactNode; className: string; hash: string }) {
  return (
    <div className={`-ml-[12px] flex items-center font-bold whitespace-nowrap ${className}`}>
      <TriDown className="-mt-[6px] w-[7px]" />
      <span className={`ml-[10px] tracking-[1.5px] ${hash}`}>{'#'.repeat(n)}</span>
      <span>{children}</span>
    </div>
  );
}

const Code = ({ lines, className }: { lines: string[]; className: string }) => (
  <div className={`w-[634px] rounded-[4px] bg-[#3b527d] pl-[5px] font-['Liberation_Mono',monospace] text-[13.53px] text-[#83bccb] [-webkit-text-stroke:0.2px] ${className}`}>
    <div className="h-[19px] leading-[19px] text-[#7f9ac0]">```md</div>
    {lines.map((l) => <div key={l} className="h-[19px] leading-[19px] whitespace-pre">{l}</div>)}
    <div className="h-[19px] leading-[19px] text-[#7f9ac0]">```</div>
  </div>
);

function Editor() {
  return (
    <div className="flex h-[1342px] flex-col overflow-hidden pl-[191px] [&>*]:shrink-0">
      <Para className="mt-[44px]">Obsidian is a Markdown-based note-taking and knowledge base app.</Para>
      <Para>We currently support the formats below:</Para>
      <Rule />
      <Heading n={3} className="mt-[24px] h-[32px] text-[19.7px] text-[#d8a67c]" hash="w-[53px]">Internal linking</Heading>
      <Code className="mt-[29px]" lines={['Link to a page: [[Internal link]].']} />
      <Para>Link to a page: [[<Link>Internal link</Link>]].</Para>
      <Rule />
      <Heading n={3} className="mt-[24px] h-[32px] text-[19.7px] text-[#d8a67c]" hash="w-[53px]">Embeds</Heading>
      <Para className="mt-[29px]">Embed another file (read more about [[<Link>Embed files</Link>]]). Here's an embedded section:</Para>
      <Code className="mt-[24px]" lines={['![[Obsidian#What is Obsidian]]']} />
      <Para>![[<Link>Obsidian#What is Obsidian</Link>]]</Para>
      <Rule />
      <Heading n={3} className="mt-[24px] h-[32px] text-[19.7px] text-[#d8a67c]" hash="w-[53px]">Headers</Heading>
      <Code
        className="mt-[29px]"
        lines={['# This is a heading 1', '## This is a heading 2', '### This is a heading 3', '#### This is a heading 4', '##### This is a heading 5', '###### This is a heading 6']}
      />
      <div className="mt-[16px] -ml-[12px] flex h-[84px] items-baseline whitespace-nowrap text-[#d56878] [text-shadow:4px_5px_5px_rgba(8,12,20,0.6)]">
        <TriDown className="mt-[18px] w-[7px] self-start" />
        <span className="ml-[15px] w-[91px] text-[68px] leading-[70px] font-light [-webkit-text-stroke:0.6px]">#</span>
        <span className="text-[38px] leading-[40px] font-black [-webkit-text-stroke:0.5px]">This is a heading 1</span>
      </div>
      <Heading n={2} className="mt-[9px] h-[34px] text-[23px] text-[#d08770]" hash="w-[47px]">This is a heading 2</Heading>
      <Heading n={3} className="mt-[7px] h-[32px] text-[19.5px] text-[#d8a67c]" hash="w-[53px]">This is a heading 3</Heading>
      <Heading n={4} className="mt-[5px] h-[30px] text-[17.8px] text-[#a3be8c]" hash="w-[60px]">This is a heading 4</Heading>
      <Heading n={5} className="mt-[4px] h-[28px] text-[16px] text-[#b48ead]" hash="w-[65px]">This is a heading 5</Heading>
      <Heading n={6} className="mt-[3px] h-[28px] text-[16px] text-[#b48ead]" hash="w-[75px]">This is a heading 6</Heading>
      <Rule className="mt-[27px]" />
      <Heading n={3} className="mt-[24px] h-[32px] text-[19.7px] text-[#d8a67c]" hash="w-[53px]">Emphasis</Heading>
      <div className="mt-[29px] h-[19px] w-[634px] rounded-[4px] bg-[#3b527d]" />
    </div>
  );
}

/* ------------------------------------------------------------------ app */

export default function App() {
  return (
    <div className="relative flex h-[1400px] w-[2560px] flex-col overflow-hidden bg-[#222e49] font-['Noto_Sans_CJK_SC','Noto_Sans',sans-serif] text-[#e5e9f0]">
      <header className="flex h-[22px] shrink-0 items-center bg-[#08090e] text-[#55575c]">
        <div className="flex w-[200px] items-center gap-[24px] pl-[41px] pt-[2px]">
          <svg width="11" height="9" viewBox="0 0 11 9" fill="none" stroke="currentColor"><path d="M11 4.5H.8M4.5.8L.8 4.5l3.7 3.7" /></svg>
          <svg width="11" height="9" viewBox="0 0 11 9" fill="none" stroke="currentColor"><path d="M0 4.5h10.2M6.5.8l3.7 3.7-3.7 3.7" /></svg>
        </div>
        <div className="flex-1 text-center text-[11.6px] leading-[20px] text-[#a4a6ab]">Hung-Su's vault - Obsidian v0.11.6</div>
        <div className="flex w-[200px] items-center justify-end gap-[21px] pr-[11px] pt-[2px]">
          <span className="h-px w-[9px] bg-current" />
          <span className="h-[9px] w-[9px] border border-current" />
          <svg width="9" height="9" viewBox="0 0 9 9" stroke="currentColor"><path d="M.5.5l8 8M8.5.5l-8 8" /></svg>
        </div>
      </header>

      <div className="flex h-[1378px]">
        <nav className="flex w-[30px] flex-col items-center bg-[#697aa1] text-[#d3d9e5]">
          <div className="mt-[41px] h-[53px]"><ChevronLeft /></div>
          <div className="flex flex-col gap-[26px]">
            <Icon><path d="M0 3h18M0 15h18" strokeWidth="1.2" /><path d="M0 9h18" strokeWidth="2" strokeOpacity=".7" /></Icon>
            <DiceIcon /><DocArrowIcon /><GraphIcon /><BlocksIcon /><CalIcon /><DiceIcon />
          </div>
          <div className="mt-auto mb-[56px] flex flex-col gap-[26px]"><VaultIcon /><HelpIcon /><GearIcon /></div>
        </nav>

        <Sidebar />

        <main className="relative w-[1057px]">
          <div className="flex h-[36px] items-center rounded-tl-[4px] border-t border-[#697aa1] bg-[#3b527d] pb-px pl-[10px] shadow-[0_2px_10px_rgba(0,0,0,0.35)]">
            <GraphIcon />
            <span className="-mt-[2px] ml-[15px] flex-1 text-[15.19px] leading-[30px] font-bold">Graph view</span>
            <CloseIcon size={18} w={1.3} />
            <span className="ml-[15px] mr-[17px]"><DotsIcon /></span>
          </div>
          <GraphCanvas />
          <div className="absolute top-[51px] left-[17px] text-[#c3c9d6]"><GearIcon /></div>
          <div className="absolute inset-y-0 right-0 w-[36px] bg-gradient-to-r from-transparent to-[#161d2ea0]" />
        </main>

        <main className="relative w-[1060px] border-l border-[#4d5d80]">
          <div className="flex h-[36px] items-center rounded-tr-[4px] border-t border-[#697aa1] pb-px pl-[10px] shadow-[0_2px_10px_rgba(0,0,0,0.25)]">
            <Icon><path d="M3 .8h7.6L15 5.2v12H3zM10.6.8v4.4H15" /></Icon>
            <span className="-mt-[2px] ml-[15px] flex-1 text-[15.19px] leading-[30px] font-bold">Format your notes</span>
            <Icon w={1.3} size={17}><path d="M1.4 1.6h15.2v14.8H1.4z" /><path d="M4 4.4h10M4 7.2h5M4 10h10M4 13h7" /><path d="M11 7.2h3" /></Icon>
            <span className="ml-[15px]"><CloseIcon size={18} w={1.3} /></span>
            <span className="ml-[15px] mr-[18px]"><DotsIcon /></span>
          </div>
          <Editor />
          <div className="absolute top-[36px] right-0 h-[175px] w-[10px] rounded-full bg-[#7485a8]" />
        </main>

        <div className="flex flex-1 flex-col items-center border-l border-[#697aa1] bg-[#3b527d] pt-[41px] pr-px"><ChevronLeft /></div>
      </div>

      <footer className="absolute right-0 bottom-0 flex h-[22px] w-[399px] items-center rounded-tl-[4px] border-t border-l border-[#697aa1] bg-[#3b527d] pl-[14px] text-[12.5px] leading-[20px] font-light whitespace-nowrap [-webkit-text-stroke:0.2px]">
        <span className="w-[113px]">Status Bar Text</span>
        <span className="w-[93px]">0 backlinks</span>
        <span className="w-[74px]">1322 words</span>
        <span>8447 characters</span>
      </footer>

      <svg width="16" height="26" viewBox="0 0 16 26" className="absolute top-[450px] left-[1560px]">
        <path d="M1.5 1.2v19l4.3-4 3 7.3 3.4-1.4-3-7.1h5.4z" fill="#fff" stroke="#111" strokeWidth="1" />
      </svg>
    </div>
  );
}
